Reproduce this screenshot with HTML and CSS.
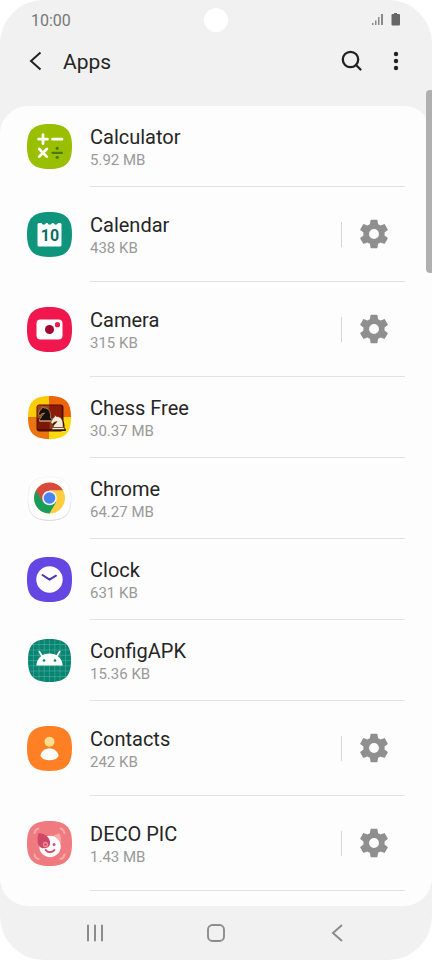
FILE: index.html
```html
<!DOCTYPE html>
<html lang="en">
<head>
    <meta charset="UTF-8">
    <meta name="viewport" content="width=device-width, initial-scale=1.0">
    <title>Apps</title>
    <link rel="stylesheet" href="styles.css">
</head>
<body>
    <svg class="defs" aria-hidden="true">
        <defs>
            <path id="squircle" d="M22.5 0C38.800 0 45 6.200 45 22.500S38.800 45 22.500 45 0 38.800 0 22.500 6.200 0 22.500 0Z"/>
            <clipPath id="tile"><use href="#squircle" transform="translate(1 1) scale(.956)"/></clipPath>
            <symbol id="gear" viewBox="0 0 24 24">
                <path d="M19.43 12.98c.04-.32.07-.64.07-.98s-.03-.66-.07-.98l2.11-1.65c.19-.15.24-.42.12-.64l-2-3.46c-.12-.22-.39-.3-.61-.22l-2.49 1c-.52-.4-1.080-.73-1.690-.98l-.38-2.650C14.460 2.180 14.250 2 14 2h-4c-.25 0-.46.18-.49.42l-.38 2.650c-.61.25-1.170.59-1.690.98l-2.490-1c-.23-.09-.49 0-.61.22l-2 3.460c-.13.22-.07.49.12.64l2.110 1.650c-.04.32-.07.65-.07.98s.03.66.07.98l-2.110 1.650c-.19.15-.24.42-.12.64l2 3.460c.12.22.39.3.61.22l2.490-1c.52.4 1.080.73 1.690.98l.38 2.650c.03.24.24.42.49.42h4c.25 0 .46-.18.49-.42l.38-2.650c.61-.25 1.170-.59 1.690-.98l2.490 1c.23.09.49 0 .61-.22l2-3.460c.12-.22.07-.49-.12-.64l-2.110-1.650zM12 15.500a3.500 3.500 0 1 1 0-7 3.500 3.500 0 0 1 0 7z"/>
            </symbol>
            <symbol id="knight" viewBox="0 0 16 16">
                <path d="M2.500 15v-2L4 12c0-2.500 3-3.500 3.500-5l-2.700.8L3 9.500 1.200 8l2-4L5 2.500 5.200.5 7 2c4.500-.2 7 3.500 6.500 10l1.300 1v2Z"/>
            </symbol>
        </defs>
    </svg>

    <div class="phone">
        <div class="status-bar">
            <span class="time">10:00</span>
            <span class="camera-hole"></span>
            <span class="status-icons">
                <svg width="12" height="14" viewBox="0 0 12 14" fill="#8a8a8a">
                    <path d="M0 10h1.500v2H0zM3 7.500h1.500V12H3zM6 4h1.500v8H6zM9 1h2v11H9z"/>
                </svg>
                <svg width="10" height="14" viewBox="0 0 10 14" fill="#666">
                    <path d="M3 0h3v1h2q1 0 1 1v9.500q0 1-1 1H1.500q-1 0-1-1V2q0-1 1-1H3z"/>
                </svg>
            </span>
        </div>

        <header class="app-bar">
            <button class="icon-btn" aria-label="Back">
                <svg width="24" height="24" viewBox="0 0 24 24" fill="none" stroke="#222" stroke-width="2">
                    <path d="M16.500 3.500 7 12l9.500 8.500"/>
                </svg>
            </button>
            <h1>Apps</h1>
            <button class="icon-btn" aria-label="Search">
                <svg width="24" height="24" viewBox="0 0 24 24" fill="none" stroke="#222" stroke-width="2.300" stroke-linecap="round">
                    <circle cx="10.500" cy="10.500" r="7.700"/>
                    <path d="m16 16 4.500 4.500"/>
                </svg>
            </button>
            <button class="icon-btn" aria-label="More options">
                <svg width="24" height="24" viewBox="0 0 24 24" fill="#222">
                    <circle cx="12" cy="5" r="2.200"/>
                    <circle cx="12" cy="12" r="2.200"/>
                    <circle cx="12" cy="19" r="2.200"/>
                </svg>
            </button>
        </header>

        <main class="card">
            <ul class="app-list">
                <li class="app">
                    <svg class="app-icon" viewBox="0 0 45 45">
                        <use href="#squircle" fill="#9abf00"/>
                        <path d="M11.500 15.200h9M16 10.700v9M25.500 15.200H35M12.200 25l7.600 7.600M19.800 25l-7.600 7.600" stroke="#fff" stroke-width="2.700" stroke-linecap="round"/>
                        <path d="M25.500 28.800H35" stroke="#4a7a12" stroke-width="2.200" stroke-linecap="round"/>
                        <circle cx="30.200" cy="24.300" r="1.600" fill="#4a7a12"/>
                        <circle cx="30.200" cy="33.300" r="1.600" fill="#4a7a12"/>
                    </svg>
                    <div class="app-body">
                        <div class="app-text">
                            <div class="app-name">Calculator</div>
                            <div class="app-size">5.92 MB</div>
                        </div>
                    </div>
                </li>
                <li class="app has-settings">
                    <svg class="app-icon" viewBox="0 0 45 45">
                        <use href="#squircle" fill="#0f957c"/>
                        <path d="M12 11h2.500a2.300 2.300 0 0 0 4.500 0h1.500a2.300 2.300 0 0 0 4.500 0h1.500a2.300 2.300 0 0 0 4.500 0h2q1.500 0 1.500 1.500V33q0 1.500-1.500 1.500H12q-1.500 0-1.500-1.500V12.500q0-1.500 1.500-1.500Z" fill="#fff"/>
                        <text class="icon-date" x="23" y="29" text-anchor="middle">10</text>
                    </svg>
                    <div class="app-body">
                        <div class="app-text">
                            <div class="app-name">Calendar</div>
                            <div class="app-size">438 KB</div>
                        </div>
                        <button class="settings-btn" aria-label="Calendar settings"><svg width="34" height="34"><use href="#gear"/></svg></button>
                    </div>
                </li>
                <li class="app has-settings">
                    <svg class="app-icon" viewBox="0 0 45 45">
                        <use href="#squircle" fill="#ef174d"/>
                        <rect x="9.500" y="12.500" width="26" height="20" rx="4" fill="#fff"/>
                        <circle cx="22.500" cy="22.500" r="4.500" fill="#a3062f"/>
                        <circle cx="30.500" cy="17.700" r="2.600" fill="#ef174d"/>
                    </svg>
                    <div class="app-body">
                        <div class="app-text">
                            <div class="app-name">Camera</div>
                            <div class="app-size">315 KB</div>
                        </div>
                        <button class="settings-btn" aria-label="Camera settings"><svg width="34" height="34"><use href="#gear"/></svg></button>
                    </div>
                </li>
                <li class="app">
                    <svg class="app-icon" viewBox="0 0 45 45">
                        <g clip-path="url(#tile)">
                            <path d="M0 0h22v22H0z" fill="#fbca08"/>
                            <path d="M22 0h23v22H22z" fill="#ec6508"/>
                            <path d="M0 22h22v23H0z" fill="#ea7410"/>
                            <path d="M22 22h23v23H22z" fill="#fcd90a"/>
                            <rect x="9.500" y="9.500" width="27" height="27" rx="3" fill="#501006"/>
                            <path d="M10.500 10.500h12V23h-12z" fill="#a74416"/>
                            <path d="M22.500 10.500h12V23h-12z" fill="#8b1a08"/>
                            <path d="M10.500 23h12v11h-12z" fill="#7c1607"/>
                            <path d="M22.500 23h12v11h-12z" fill="#9c3b14"/>
                            <use href="#knight" x="10" y="11" width="16" height="16" fill="#17110e" stroke="#d9b08c" stroke-width=".6"/>
                            <path d="M12.500 26h12" stroke="#d9b08c"/>
                            <use href="#knight" x="24" y="21" width="16" height="16" fill="#211009"/>
                            <use href="#knight" x="22.500" y="19.500" width="16" height="16" fill="#f6ead8" stroke="#5b3018" stroke-width=".6"/>
                            <path d="M25 32.500h12" stroke="#5b3018" stroke-width=".8"/>
                        </g>
                    </svg>
                    <div class="app-body">
                        <div class="app-text">
                            <div class="app-name">Chess Free</div>
                            <div class="app-size">30.37 MB</div>
                        </div>
                    </div>
                </li>
                <li class="app">
                    <svg class="app-icon" viewBox="0 0 45 45">
                        <use href="#squircle" transform="translate(1 1.700) scale(.956)" fill="#c8c8c8"/>
                        <use href="#squircle" transform="translate(1 1) scale(.956)" fill="#fff" stroke="#ececec" stroke-width=".6"/>
                        <circle cx="22.500" cy="22" r="15.500" fill="#ffcd40"/>
                        <path d="M22.500 22 9.080 14.250A15.500 15.500 0 0 0 22.500 37.500l6.700-11.600Z" fill="#1a9c5a"/>
                        <path d="M22.500 14.250h13.420A15.500 15.500 0 0 0 9.080 14.250l6.700 11.600L22.500 22Z" fill="#d84a3d"/>
                        <circle cx="22.500" cy="22" r="7.300" fill="#f3f3f3"/>
                        <circle cx="22.500" cy="22" r="5.800" fill="#4a85ef"/>
                    </svg>
                    <div class="app-body">
                        <div class="app-text">
                            <div class="app-name">Chrome</div>
                            <div class="app-size">64.27 MB</div>
                        </div>
                    </div>
                </li>
                <li class="app">
                    <svg class="app-icon" viewBox="0 0 45 45">
                        <use href="#squircle" fill="#6446e2"/>
                        <circle cx="22.500" cy="22.500" r="13.200" fill="#fff"/>
                        <path d="m15.500 18 7 4.700 6.500-4" fill="none" stroke="#5034b5" stroke-width="2" stroke-linecap="round" stroke-linejoin="round"/>
                    </svg>
                    <div class="app-body">
                        <div class="app-text">
                            <div class="app-name">Clock</div>
                            <div class="app-size">631 KB</div>
                        </div>
                    </div>
                </li>
                <li class="app">
                    <svg class="app-icon" viewBox="0 0 45 45">
                        <g clip-path="url(#tile)">
                            <path d="M0 0h45v45H0z" fill="#078573"/>
                            <path d="M6.500 0v45M12 0v45M17.300 0v45M22.500 0v45M27.800 0v45M33 0v45M38.500 0v45M0 6.500h45M0 12h45M0 17.300h45M0 22.500h45M0 27.800h45M0 33h45M0 38.500h45" stroke="#5fb3a6" stroke-width=".5"/>
                        </g>
                        <path d="M9.300 27.500C9.800 20 15.500 15.500 22.500 15.500S35.200 20 35.700 27.500Z" fill="#fff"/>
                        <path d="m15.300 18.500-3-5M29.700 18.500l3-5" stroke="#fff" stroke-width="1.600" stroke-linecap="round"/>
                        <circle cx="17" cy="22.500" r="1.300" fill="#078573"/>
                        <circle cx="28" cy="22.500" r="1.300" fill="#078573"/>
                    </svg>
                    <div class="app-body">
                        <div class="app-text">
                            <div class="app-name">ConfigAPK</div>
                            <div class="app-size">15.36 KB</div>
                        </div>
                    </div>
                </li>
                <li class="app has-settings">
                    <svg class="app-icon" viewBox="0 0 45 45">
                        <use href="#squircle" fill="#ff8024"/>
                        <circle cx="22.500" cy="15.700" r="5" fill="#ffdf8e"/>
                        <path d="M13.500 29c1.500-4.500 5-6.500 9-6.500s7.500 2 9 6.500c.3 1-1.500 5.300-9 5.300s-9.300-4.300-9-5.300Z" fill="#fff"/>
                    </svg>
                    <div class="app-body">
                        <div class="app-text">
                            <div class="app-name">Contacts</div>
                            <div class="app-size">242 KB</div>
                        </div>
                        <button class="settings-btn" aria-label="Contacts settings"><svg width="34" height="34"><use href="#gear"/></svg></button>
                    </div>
                </li>
                <li class="app has-settings">
                    <svg class="app-icon" viewBox="0 0 45 45">
                        <use href="#squircle" fill="#ef7a80"/>
                        <path d="M7.500 12q.5-3.500 4-4.500M37.500 12q-.5-3.500-4-4.500M7.500 33.500q.5 3.500 4 4.500M37.500 33.500q-.5 3.500-4 4.500" fill="none" stroke="#f7a9a8" stroke-width="2" stroke-linecap="round"/>
                        <path d="M24 17q4-4.500 9-4.500 1.800 5 .5 10.500Z" fill="#f9a9a2"/>
                        <circle cx="23" cy="25.500" r="10.700" fill="#fff"/>
                        <path d="M11.500 12q9.500.5 11.500 8.500 1 6-5 6.800-4.500.4-6.500-3.300Q9.700 19.500 11.500 12Z" fill="#cf4868"/>
                        <circle cx="18.500" cy="23.500" r="2" fill="none" stroke="#ef8d96" stroke-width="1.300"/>
                        <circle cx="27" cy="23.500" r="1.500" fill="#d4536f"/>
                        <path d="M18.500 29q4.500 4.500 9 0" fill="none" stroke="#d4536f" stroke-width="1.800" stroke-linecap="round"/>
                    </svg>
                    <div class="app-body">
                        <div class="app-text">
                            <div class="app-name">DECO PIC</div>
                            <div class="app-size">1.43 MB</div>
                        </div>
                        <button class="settings-btn" aria-label="DECO PIC settings"><svg width="34" height="34"><use href="#gear"/></svg></button>
                    </div>
                </li>
            </ul>
        </main>

        <nav class="nav-bar">
            <button class="icon-btn" aria-label="Recents">
                <svg width="24" height="24" viewBox="0 0 24 24" stroke="#8c8c8c" stroke-width="2" stroke-linecap="round">
                    <path d="M5 4.500v15M12 4.500v15M19 4.500v15"/>
                </svg>
            </button>
            <button class="icon-btn" aria-label="Home">
                <svg width="24" height="24" viewBox="0 0 24 24" fill="none" stroke="#8c8c8c" stroke-width="1.900">
                    <rect x="4" y="4" width="16" height="16" rx="4.500"/>
                </svg>
            </button>
            <button class="icon-btn" aria-label="Back">
                <svg width="24" height="24" viewBox="0 0 24 24" fill="none" stroke="#8c8c8c" stroke-width="2">
                    <path d="m17 4-9 8 9 8"/>
                </svg>
            </button>
        </nav>

        <div class="scroll-thumb"></div>
    </div>
</body>
</html>
```
FILE: styles.css
```css
* {
    box-sizing: border-box;
}
body {
    margin: 0;
    background: #fff;
    color: #252525;
    font-family: Roboto, sans-serif;
}
button {
    padding: 0;
    border: none;
    background: none;
    cursor: pointer;
}
svg {
    display: block;
}
.defs {
    position: absolute;
    width: 0;
    height: 0;
}
.phone {
    position: relative;
    display: flex;
    flex-direction: column;
    min-height: 100vh;
    background: #f1f1f1;
    border-radius: 44px;
    overflow: hidden;
}

/* top */
.status-bar {
    display: grid;
    grid-template-columns: 1fr auto 1fr;
    align-items: center;
    height: 40px;
    padding: 0 31px;
}
.time {
    font-size: 16px;
    color: #777;
}
.camera-hole {
    width: 24px;
    height: 24px;
    border-radius: 50%;
    background: #fff;
}
.status-icons {
    display: flex;
    justify-content: flex-end;
    gap: 7px;
}
.app-bar {
    display: flex;
    align-items: center;
    height: 42px;
    margin-bottom: 24px;
    padding: 0 14px;
}
.icon-btn {
    display: flex;
    align-items: center;
    justify-content: center;
    width: 44px;
    height: 42px;
}
h1 {
    flex: 1;
    margin: 0;
    padding: 2px 0 0 5px;
    font-size: 21px;
    font-weight: 400;
}

/* list */
.card {
    flex: 1;
    padding: 0 27px 15px;
    background: #fdfdfd;
    border-radius: 28px;
}
.app-list {
    margin: 0;
    padding: 0;
    list-style: none;
}
.app {
    display: flex;
    align-items: center;
    gap: 18px;
    height: 81px;
}
.app.has-settings {
    height: 95px;
}
.app-icon {
    width: 45px;
    height: 45px;
    margin-bottom: 1px;
}
.app-body {
    flex: 1;
    align-self: stretch;
    display: flex;
    align-items: center;
    border-bottom: 1px solid #e2e2e2;
}
.app-text {
    flex: 1;
    padding-top: 1px;
}
.app-name {
    font-size: 20px;
    line-height: 26px;
}
.app-size {
    font-size: 15px;
    line-height: 20px;
    color: #999;
}
.settings-btn {
    display: flex;
    align-items: center;
    justify-content: center;
    width: 64px;
    height: 25px;
    border-left: 1px solid #d6d6d6;
    fill: #8f8f8f;
}
.icon-date {
    font-size: 16px;
    font-weight: 700;
    fill: #0a6f62;
}

/* bottom */
.nav-bar {
    display: flex;
    align-items: center;
    justify-content: space-between;
    height: 54px;
    padding: 0 73px;
}

.scroll-thumb {
    position: absolute;
    top: 90px;
    right: 0;
    width: 6px;
    height: 183px;
    border-radius: 4px 0 0 4px;
    background: #b0b0b0;
}
```
